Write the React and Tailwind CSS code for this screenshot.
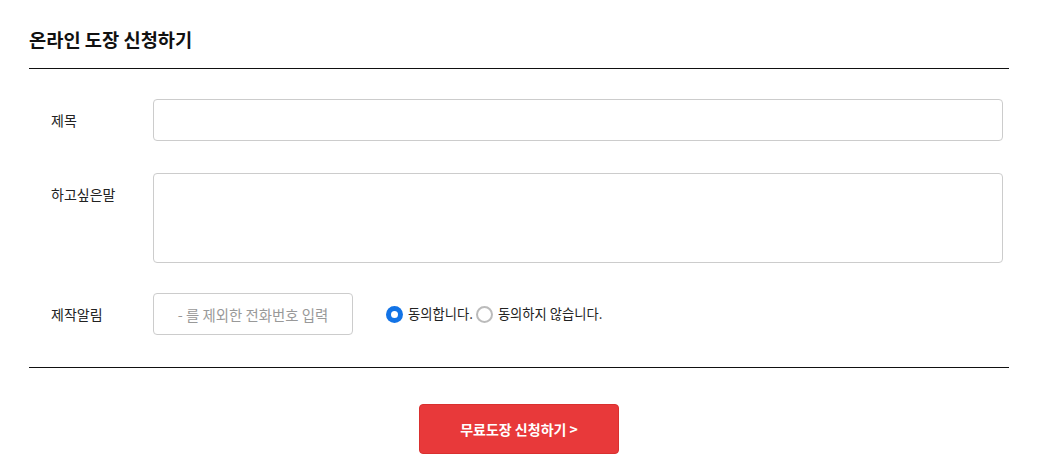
const font = { fontFamily: '"Noto Sans CJK KR", "Noto Sans", sans-serif' };

function Row({ label, children }) {
  return (
    <div className="flex items-start">
      <div className="w-[124px] shrink-0 pl-[22px] h-[42px] flex items-center text-[14px] text-[#222]">
        {label}
      </div>
      <div className="flex-1 min-w-0">{children}</div>
    </div>
  );
}

export default function App() {
  return (
    <div className="min-h-screen bg-white" style={font}>
      <div className="w-[980px] ml-[29px]">
        <div className="pt-[26px] pb-[16px] border-b border-[#111]">
          <h2 className="text-[18.7px] leading-[26px] font-bold text-[#111]">
            온라인 도장 신청하기
          </h2>
        </div>
        <div className="pt-[30px] pb-[32px] pr-[6px] border-b border-[#111] flex flex-col">
          <Row label="제목">
            <input
              type="text"
              className="block w-full h-[42px] border border-[#ccc] rounded-[4px] px-3 text-[14px] outline-none"
            />
          </Row>
          <div className="h-[32px]" />
          <Row label="하고싶은말">
            <textarea className="block w-full h-[90px] border border-[#ccc] rounded-[4px] px-3 py-2 text-[14px] outline-none resize-none" />
          </Row>
          <div className="h-[30px]" />
          <Row label="제작알림">
            <div className="flex items-center h-[42px]">
              <input
                type="text"
                placeholder="- 를 제외한 전화번호 입력"
                className="block w-[200px] h-[42px] border border-[#ccc] rounded-[4px] px-3 text-[14.4px] text-center outline-none placeholder:text-[#999]"
              />
              <label className="flex items-center ml-[33px] text-[13.3px] text-[#222]">
                <span className="w-[17px] h-[17px] rounded-full bg-[#1273e6] flex items-center justify-center">
                  <span className="w-[7px] h-[7px] rounded-full bg-white" />
                </span>
                <span className="ml-[5px]">동의합니다.</span>
              </label>
              <label className="flex items-center ml-[3px] text-[13.3px] text-[#222]">
                <span className="w-[17px] h-[17px] rounded-full border-2 border-[#bbb] bg-white" />
                <span className="ml-[5px]">동의하지 않습니다.</span>
              </label>
            </div>
          </Row>
        </div>
        <div className="flex justify-center pt-[36px]">
          <button className="w-[200px] h-[50px] bg-[#e8393a] border border-[#d9302f] rounded-[4px] text-white text-[14px] font-bold">
            무료도장 신청하기 &gt;
          </button>
        </div>
      </div>
    </div>
  );
}
